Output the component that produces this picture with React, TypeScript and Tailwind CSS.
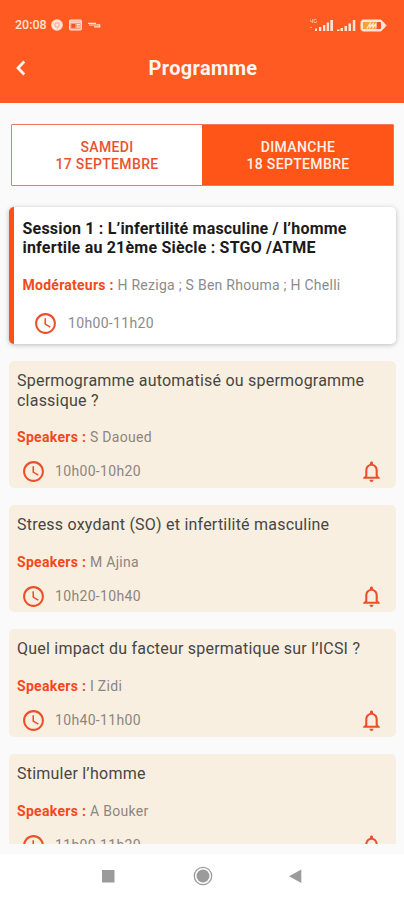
import { MdAccessTime, MdNotificationsNone } from "react-icons/md";

const talks = [
  {
    title: "Spermogramme automatisé ou spermogramme classique ?",
    speaker: "S Daoued",
    time: "10h00-10h20",
  },
  {
    title: "Stress oxydant (SO) et infertilité masculine",
    speaker: "M Ajina",
    time: "10h20-10h40",
  },
  {
    title: "Quel impact du facteur spermatique sur l’ICSI ?",
    speaker: "I Zidi",
    time: "10h40-11h00",
  },
  { title: "Stimuler l’homme", speaker: "A Bouker", time: "11h00-11h20" },
];

const StatusBar = () => {
  return (
    <div className="flex h-[50px] items-center pl-[15px] pr-[17px] text-[#ffe3d6]">
      <span className="text-[12.5px] font-medium leading-4">20:08</span>
      <svg className="ml-[4px]" width="12" height="12" viewBox="0 0 12 12">
        <circle cx="6" cy="6" r="5.8" fill="currentColor" />
        <circle cx="6" cy="6" r="2.2" fill="none" stroke="#ff8d66" strokeWidth="0.8" />
        <path d="M6 3.8h4.6M4.1 7.1 2 3.5M7.9 7.1 5.8 11" stroke="#ffb89e" strokeWidth="0.7" />
      </svg>
      <svg className="ml-[6px]" width="13" height="12" viewBox="0 0 13 12">
        <rect x="0.7" y="1.2" width="11.6" height="9.6" rx="1" fill="#ff9a75" stroke="currentColor" strokeWidth="1.2" />
        <path d="M1 3.2h11M7.8 5.7h3M7.8 8h3" stroke="currentColor" strokeWidth="1.2" />
        <rect x="2.5" y="5" width="3.8" height="3.8" fill="#f4511e" />
      </svg>
      <svg className="ml-[6px]" width="13" height="8" viewBox="0 0 13 8">
        <path d="M0 2.3h8M1 4h8.5M6 5.8h6.3M9.5 3.8h2.2v2" fill="none" stroke="currentColor" strokeWidth="1.2" />
      </svg>

      {/* Signal and battery */}
      <svg className="ml-auto" width="24" height="14" viewBox="0 0 24 14">
        <path d="M1.5 1.5v2h2M3.5 1v4M5 1.5h2.5M5 1.5v3h2.5v-1.5M1 9.5h2" fill="none" stroke="#ffb294" strokeWidth="0.9" />
        <path d="M6 10.5h2V13H6zM10 9h2.3v4H10zM14 7h2.3v6H14zM17.7 4.5H20V13h-2.3zM21.3 2H24v11h-2.7z" fill="currentColor" />
      </svg>
      <svg className="ml-[4px]" width="19" height="14" viewBox="0 0 19 14">
        <path d="M0 11.5h2.5V13H0zM3.5 10h2.5v3H3.5zM7.5 8h2.5v5H7.5zM11.5 5.5H14V13h-2.5zM15.8 2h2.5v11h-2.5z" fill="currentColor" />
      </svg>
      <svg className="ml-[4px]" width="27" height="13" viewBox="0 0 27 13">
        <path d="M3.5 1h17.5l1.5 1.5 3.5 4-3.5 4L21 12H3.5C2 12 1 11 1 9.5v-6C1 2 2 1 3.5 1Z" fill="currentColor" stroke="currentColor" />
        <rect x="3" y="3" width="18" height="7" rx="1" fill="#f4511e" />
        <rect x="3" y="3" width="13" height="7" rx="1" fill="#f9a23b" />
        <path d="m7 9.5 3-5v4l3-4v4l3-4v5" fill="none" stroke="#fff0df" strokeWidth="1.2" />
      </svg>
    </div>
  );
};

const Header = () => {
  return (
    <header className="h-[103px] shrink-0 bg-[#ff5a22]">
      <StatusBar />
      <div className="grid h-[36px] grid-cols-[60px_1fr_60px] items-center">
        <svg className="ml-[15px]" width="12" height="16" viewBox="0 0 12 16">
          <path d="M9.3 1.5 3 8l6.3 6.5" fill="none" stroke="#fff4ef" strokeWidth="2.8" />
        </svg>
        <h1 className="pl-[2px] text-center text-[20px] font-bold leading-6 tracking-[0.35px] text-[#fff6f2]">Programme</h1>
      </div>
    </header>
  );
};

const Session = () => {
  return (
    <section className="ml-[9px] mr-[8px] mt-[21px] h-[137px] shrink-0 rounded-[5px] border-l-[5px] border-[#ff5019] bg-white pl-[8.5px] pt-[11.5px] shadow-[0_1px_5px_rgba(0,0,0,0.25)]">
      <h2 className="whitespace-nowrap text-[16px] font-bold leading-[19.5px] tracking-[0.2px] text-[#1b1b1b]">
        Session 1 : L’infertilité masculine / l’homme
        <br />
        infertile au 21ème Siècle : STGO /ATME
      </h2>
      <p className="mt-[19.5px] text-[14px] leading-4 tracking-[0.26px] text-[#8b8b8b]">
        <span className="font-bold text-[#f4481b]">Modérateurs :</span> H Reziga ; S Ben Rhouma ; H Chelli
      </p>
      <div className="mt-[18px] flex items-center text-[#e9502b]">
        <MdAccessTime className="ml-[10px]" size={25} />
        <span className="ml-[10.5px] text-[14px] tracking-[0.33px] text-[#8b8b8b]">10h00-11h20</span>
      </div>
    </section>
  );
};

const Talk = ({ title, speaker, time }: { title: string; speaker: string; time: string }) => {
  return (
    <article className="shrink-0 rounded-[5px] bg-[#f8efe0] px-[8px] pb-[3.5px] pt-[10px]">
      <h3 className="text-[16px] leading-[19.5px] tracking-[0.22px] text-[#484643]">{title}</h3>
      <p className="mt-[19.4px] text-[14px] leading-4 tracking-[0.3px] text-[#8b867f]">
        <span className="font-bold text-[#f4481b]">Speakers :</span> {speaker}
      </p>
      <div className="mt-[14.1px] flex items-center text-[#e9502b]">
        <MdAccessTime className="ml-[4px]" size={25} />
        <span className="ml-[9px] text-[14px] tracking-[0.33px] text-[#8b867f]">{time}</span>
        <MdNotificationsNone className="ml-auto mr-[4px]" size={25} />
      </div>
    </article>
  );
};

const NavBar = () => {
  return (
    <nav className="grid h-[46px] shrink-0 grid-cols-[93px_93px_94px_1fr] bg-white pt-[12px] text-[#9b9b9b]">
      <span />
      <svg className="ml-[8px]" width="14" height="20" viewBox="0 0 14 20">
        <rect x="1" y="4" width="12.5" height="12.5" fill="currentColor" />
      </svg>
      <svg className="ml-[6.5px]" width="20" height="20" viewBox="0 0 20 20">
        <circle cx="10" cy="10" r="8.7" fill="none" stroke="currentColor" strokeWidth="1.3" />
        <circle cx="10" cy="10" r="6.5" fill="currentColor" />
      </svg>
      <svg className="ml-[8px]" width="14" height="20" viewBox="0 0 14 20">
        <path d="M13.3 3.5v13.5L1 10.2z" fill="currentColor" />
      </svg>
    </nav>
  );
};

const App = () => {
  return (
    <div className="flex h-[900px] w-[404px] flex-col overflow-hidden bg-[#fafafa] font-['Roboto',sans-serif]">
      <Header />

      {/* Day tabs */}
      <div className="ml-[11px] mr-[10px] mt-[21px] grid h-[62px] shrink-0 grid-cols-[190px_1fr] overflow-hidden rounded-[1px] border border-[#f0785b] text-center text-[14px] font-medium leading-[17.5px] tracking-[0.35px]">
        <div className="flex items-center justify-center bg-white pt-[2px] text-[#e8532d]">
          <span>
            SAMEDI
            <br />
            17 SEPTEMBRE
          </span>
        </div>
        <div className="flex items-center justify-center bg-[#ff5519] pl-[1px] pt-[2px] text-[#fff1e8]">
          <span>
            DIMANCHE
            <br />
            18 SEPTEMBRE
          </span>
        </div>
      </div>

      <Session />

      {/* Talks, the last one is cut by the bottom of the list */}
      <div className="ml-[9px] mr-[8px] mt-[17px] flex h-[483px] shrink-0 flex-col gap-[17px] overflow-hidden">
        {talks.map((talk) => (
          <Talk key={talk.time} {...talk} />
        ))}
      </div>
      <div className="h-[10px] shrink-0" />
      <NavBar />
    </div>
  );
};

export default App;
